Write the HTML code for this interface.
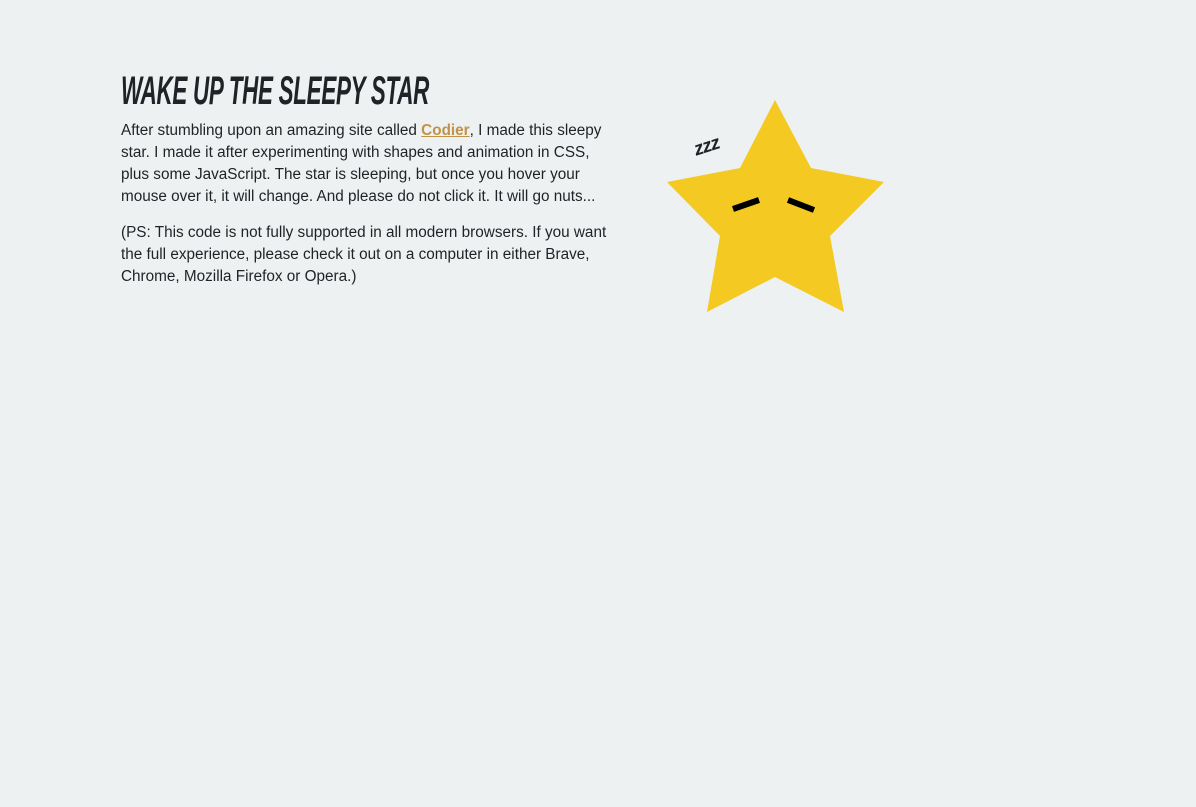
<!DOCTYPE html>
<html><head><meta charset="utf-8"><style>
html,body{margin:0;padding:0;background:#edf1f2;width:1196px;height:807px;overflow:hidden}
body{font-family:"Liberation Sans","DejaVu Sans",sans-serif;color:#1f2226}
h1{position:absolute;left:121px;top:71px;margin:0;font-size:40px;font-weight:bold;font-style:italic;letter-spacing:-0.5px;transform-origin:0 0;transform:scaleX(0.56);white-space:nowrap;color:#1f2226;line-height:40px}
.p{position:absolute;left:121px;font-size:15.3px;line-height:22px;white-space:nowrap;color:#1f2226}
a{color:#c0924a;font-weight:bold;text-decoration:underline}
.z{position:absolute;left:694px;top:136px;font-weight:bold;font-style:italic;font-size:19px;transform:rotate(-18deg);color:#1f2226;letter-spacing:-1px}
</style></head><body>
<h1>WAKE UP THE SLEEPY STAR</h1>
<div class="p" style="top:120px">After stumbling upon an amazing site called <a>Codier</a>, I made this sleepy<br>star. I made it after experimenting with shapes and animation in CSS,<br>plus some JavaScript. The star is sleeping, but once you hover your<br>mouse over it, it will change. And please do not click it. It will go nuts...</div>
<div class="p" style="top:222px">(PS: This code is not fully supported in all modern browsers. If you want<br>the full experience, please check it out on a computer in either Brave,<br>Chrome, Mozilla Firefox or Opera.)</div>
<div class="z">zzz</div>
<svg style="position:absolute;left:0;top:0" width="1196" height="807">
<polygon fill="#f3c922" points="775,100 811,168 884,182 830,236 844,312 775,277 707,312 720,236 667,182 740,168"/>
<line x1="733" y1="209" x2="759" y2="200" stroke="#000" stroke-width="6"/>
<line x1="788" y1="200" x2="814" y2="210" stroke="#000" stroke-width="6"/>
</svg>
</body></html>
